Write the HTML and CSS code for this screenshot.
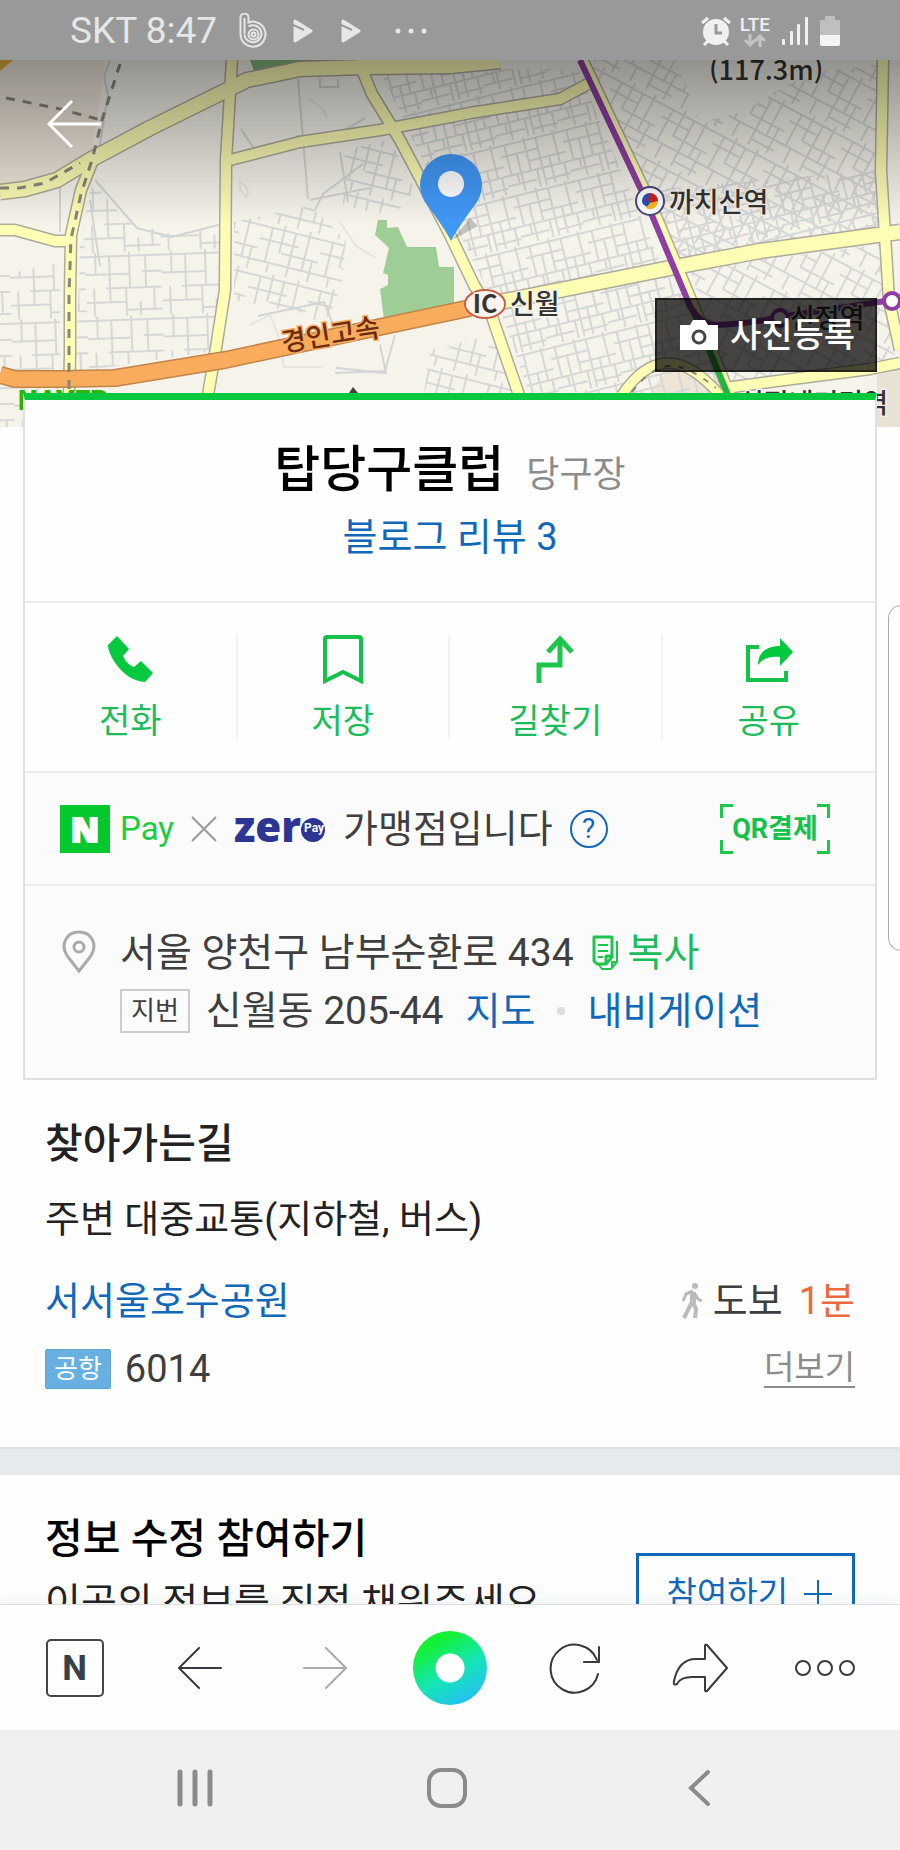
FILE: index.html
```html
<!DOCTYPE html>
<html lang="ko">
<head>
    <meta charset="UTF-8">
    <meta name="viewport" content="width=device-width, initial-scale=1.0">
    <title>탑당구클럽</title>
    <link rel="stylesheet" href="styles.css">
</head>
<body>
    <header class="status-bar">
        <div class="status-left">
            <span class="carrier">SKT 8:47</span>
            <svg class="icon-band" width="30" height="36" viewBox="0 0 30 36" fill="none" stroke="#e6e6e6" stroke-width="2">
                <path d="M1.500 21V4.500a3.500 3.500 0 0 1 8 0V9.500a12.500 12.500 0 1 1-8 12z"/>
                <path d="M5.500 21V5M9.500 13.500a8.500 8.500 0 1 1-4 8"/>
                <circle cx="14.500" cy="21.500" r="5"/>
                <circle cx="14.500" cy="21.500" r="2"/>
            </svg>
            <svg class="icon-play" width="20" height="24" viewBox="0 0 20 24">
                <path d="M2 2l16 10-16 10z" fill="#e6e6e6" stroke="#e6e6e6" stroke-width="3" stroke-linejoin="round"/>
                <path d="M0 6l11 5" fill="none" stroke="#999" stroke-width="2"/>
            </svg>
            <svg class="icon-play" width="20" height="24" viewBox="0 0 20 24">
                <path d="M2 2l16 10-16 10z" fill="#e6e6e6" stroke="#e6e6e6" stroke-width="3" stroke-linejoin="round"/>
                <path d="M0 6l11 5" fill="none" stroke="#999" stroke-width="2"/>
            </svg>
            <svg width="32" height="6" viewBox="0 0 32 6" fill="#e6e6e6">
                <circle cx="3" cy="3" r="2.500"/><circle cx="16" cy="3" r="2.500"/><circle cx="29" cy="3" r="2.500"/>
            </svg>
        </div>
        <div class="status-right">
            <svg width="32" height="30" viewBox="0 0 32 30" fill="none" stroke="#f0f0f0">
                <circle cx="16" cy="16" r="13" fill="#f0f0f0" stroke="none"/>
                <path d="M2 7l6-5M30 7l-6-5M8 25l-4 4M24 25l4 4" stroke-width="3"/>
                <path d="M16 8v9h6" stroke="#999" stroke-width="3"/>
            </svg>
            <div class="lte">
                <span>LTE</span>
                <svg width="22" height="13" viewBox="0 0 22 13" fill="none" stroke="#c4c4c4" stroke-width="3">
                    <path d="M6 0v11M1 6l5 5 5-5M16 13V2M11 7l5-5 5 5"/>
                </svg>
            </div>
            <svg width="26" height="28" viewBox="0 0 26 28" fill="#f0f0f0">
                <rect x="0" y="22" width="3" height="6" rx="1"/><rect x="8" y="14" width="3" height="14" rx="1"/>
                <rect x="15" y="7" width="3" height="21" rx="1"/><rect x="23" y="0" width="3" height="28" rx="1"/>
            </svg>
            <svg width="20" height="30" viewBox="0 0 20 30">
                <path d="M5 4V0h10v4h5v15H0V4z" fill="#bfbfbf"/>
                <path d="M0 19h20v9q0 2-2 2H2q-2 0-2-2z" fill="#f4f4f4"/>
            </svg>
        </div>
    </header>

    <main class="page">
        <section class="hero">
            <svg class="map" viewBox="0 60 900 367" preserveAspectRatio="xMidYMin slice">
                <defs>
                    <pattern id="blocks" width="76" height="64" patternUnits="userSpaceOnUse" patternTransform="rotate(-2)">
                        <path d="M0 4h76M0 22h44M20 36h56M0 50h40M56 20h20M40 58h36M10 0v22M24 4v46M44 0v36M60 4v32M8 36v28M40 36v28M54 50v14M68 36v22"/>
                    </pattern>
                    <pattern id="dense" width="64" height="52" patternUnits="userSpaceOnUse" patternTransform="rotate(-14)">
                        <path d="M0 3h64M0 14h38M26 24h38M0 34h64M0 44h30M38 46h26M6 3v31M16 14v38M26 0v34M38 3v49M47 24v28M56 0v34M12 34v10M32 34v18M60 34v18"/>
                    </pattern>
                    <pattern id="dense2" width="58" height="56" patternUnits="userSpaceOnUse" patternTransform="rotate(28)">
                        <path d="M0 5h58M0 16h32M20 28h38M0 40h58M32 50h26M8 5v35M20 0v28M32 5v51M44 0v40M52 28v28M14 40v16"/>
                    </pattern>
                    <pattern id="dense3" width="62" height="50" patternUnits="userSpaceOnUse" patternTransform="rotate(14)">
                        <path d="M0 5h62M0 18h40M24 28h38M0 40h62M10 5v35M22 0v28M34 5v45M48 0v40M56 28v22M14 40v10"/>
                    </pattern>
                    <linearGradient id="shade" x1="0" y1="0" x2="0" y2="1">
                        <stop offset="0" stop-color="#000" stop-opacity=".4"/>
                        <stop offset="1" stop-color="#000" stop-opacity="0"/>
                    </linearGradient>
                </defs>
                <rect x="0" y="60" width="900" height="367" fill="#f6f3eb"/>
                <path d="M0 60h105L92 155l-37 22-55 8z" fill="#f0e8dc"/>
                <path d="M650 395q10-24 30-26t42 26z" fill="#eee4d6"/>
                <path d="M877 375l23-5v57h-23z" fill="#e8e2d4"/>
                <path d="M0 60h13L0 71z" fill="#e5b13c"/>

                <!-- side streets -->
                <g class="street">
                    <path d="M0 275l60-12v164H0z" fill="url(#blocks)"/>
                    <path d="M80 242l12-60 36 40 46 13 46-11v126l-144 22z" fill="url(#blocks)"/>
                    <path d="M234 222l76-16 36 34-4 44-16 42-28-14-64-12z" fill="url(#dense3)"/>
                    <path d="M380 72l60-3 138 0 50 118 46 108-180 8-65-130z" fill="url(#dense)"/>
                    <path d="M345 150l45-10 25 50-20 26-52-10z" fill="url(#dense3)"/>
                    <path d="M590 60h86l24 62 44-10 60-38 76-10v178l-130 20-70 12z" fill="url(#dense2)"/>
                    <path d="M650 190l228-20v60l-196 32z" fill="url(#dense)"/>
                    <path d="M500 310l180-35 44 120H530z" fill="url(#dense)"/>
                    <path d="M690 270l192-26 14 120-166 20z" fill="url(#dense2)"/>
                    <path d="M430 350l66-16 24 60h-96z" fill="url(#dense3)"/>
                    <path d="M110 60l-6 17 4 18-10 60M95 180l42 48 35 9 50-13M90 200l10 66M60 180v52M298 79l10 120M320 78v9h18V79M241 129l14 21M280 145l18-9 18 8M365 118l-20 12 25-3M340 152l8 50M310 200l60-12M315 210l8-16 40-30M380 345l6 28-50-5M395 335l-10 36-50 2M258 316l66-14 16 40"/>
                    <path d="M240 182q12 8 6 15l-6-8zM308 98l14 10 5 10M340 222l16 24 20 12M250 325l20-10 8 20 6 32h38" class="trail"/>
                </g>

                <path d="M250 60h73v3l-23 3-45 8z" fill="#83b87c"/>
                <path d="M378 220h9v8l11-1 9 20h29l3 20h15v38l-70 14-4-30 8-4v-10l-5-2 6-25-14-13z" fill="#9ecd95"/>

                <!-- main roads: casing first, fill on top -->
                <g class="road-edge">
                    <path d="M0 192l25-3 32-9 33-20 60-32 75-37 22-11 53-11 65-2 85-1 50-5" stroke-width="17"/>
                    <path d="M0 230h15l40 11h15M230 160l70-18 80-12 70-13 20-4 90-14 28-15M93 160l-12 30-10 45-1 60v60l-1 40" stroke-width="13"/>
                    <path d="M232 60l-6 100-1 130-9 58-8 47M358 60l14 34 28 46 50 95 24 50 16 26 29 84" stroke-width="13"/>
                    <path d="M490 304l70-14 120-24 80-15 140-19" stroke-width="17"/>
                    <path d="M883 60l-2 110 4 65 4 65 11 50M725 388l75-10 70-9 30-6" stroke-width="13"/>
                    <path d="M583 60l67 141 50 119 30 75M622 395q20-30 44-32t54 32" stroke-width="12"/>
                </g>
                <g class="road">
                    <path d="M0 192l25-3 32-9 33-20 60-32 75-37 22-11 53-11 65-2 85-1 50-5" stroke-width="14"/>
                    <path d="M0 230h15l40 11h15M230 160l70-18 80-12 70-13 20-4 90-14 28-15M93 160l-12 30-10 45-1 60v60l-1 40" stroke-width="10"/>
                    <path d="M232 60l-6 100-1 130-9 58-8 47M358 60l14 34 28 46 50 95 24 50 16 26 29 84" stroke-width="10"/>
                    <path d="M490 304l70-14 120-24 80-15 140-19" stroke-width="14"/>
                    <path d="M883 60l-2 110 4 65 4 65 11 50M725 388l75-10 70-9 30-6" stroke-width="10"/>
                    <path d="M583 60l67 141 50 119 30 75M622 395q20-30 44-32t54 32" stroke-width="9"/>
                </g>

                <g fill="none" stroke-linejoin="round">
                    <path d="M0 375l15 4h45l55-1 110-18 155-33 90-19" stroke="#c1854a" stroke-width="18"/>
                    <path d="M0 375l15 4h45l55-1 110-18 155-33 90-19" stroke="#f9ac5c" stroke-width="15"/>
                    <path d="M120 64l-18 56-10 40-11 34-10 45-2 56v100M6 98l50 10 45 12M0 188h20l25-5 35-20" stroke="#8c857b" stroke-width="3" stroke-dasharray="9 8"/>
                    <path d="M632 392q18-24 36-26t48 22" stroke="#8c857b" stroke-width="2" stroke-dasharray="6 8"/>
                    <path d="M693 310l35 85" stroke="#25b43a" stroke-width="6"/>
                    <path d="M580 60l63 134 47 112q10 18 26 19 40-2 64-8l112-17" stroke="#8f3fa3" stroke-width="6"/>
                </g>
                <circle cx="892" cy="301" r="8" fill="#fff" stroke="#8f3fa3" stroke-width="4"/>
                <circle cx="780" cy="318" r="8" fill="#fff" stroke="#8f3fa3" stroke-width="4"/>
                <circle cx="650" cy="201" r="14" fill="#fff" stroke="#4c4a78" stroke-width="2"/>
                <path d="M642 201a8 8 0 0 1 8-8l2 8-4 6q-6-2-6-6z" fill="#2b50b8"/>
                <path d="M650 193a8 8 0 0 1 8 8l-5 3-5-4z" fill="#d02020"/>
                <path d="M658 201a8 8 0 0 1-12 7l4-5z" fill="#f5bd18"/>

                <text class="map-label" x="669" y="212">까치산역</text>
                <text class="map-label" x="510" y="314">신월</text>
                <text class="map-label" x="790" y="328">신정역</text>
                <text class="map-label" x="888" y="413" text-anchor="end">신정네거리역</text>
                <text class="map-label" x="709" y="80">(117.3m)</text>
                <text class="map-label highway" x="283" y="352" transform="rotate(-9 283 352)">경인고속</text>
                <ellipse cx="485" cy="304" rx="20" ry="14" fill="#fdf3ef" stroke="#c8614a" stroke-width="2"/>
                <text class="map-label ic" x="485" y="313" text-anchor="middle">IC</text>
                <text class="map-brand" x="18" y="410">NAVER</text>
                <path d="M353 387l5 6h-9z" fill="#444"/>

                <path d="M452 240l26-14-8-8z" fill="#000" opacity=".2"/>
                <path d="M451 241q-6-12-26-39a31 31 0 1 1 52 0q-20 27-26 39z" fill="#4198f7"/>
                <circle cx="451" cy="184" r="13" fill="#fff"/>
                <rect x="0" y="60" width="900" height="165" fill="url(#shade)"/>
            </svg>
            <button class="back-btn" aria-label="뒤로">
                <svg width="54" height="50" viewBox="0 0 54 50" fill="none" stroke="#fff" stroke-width="3">
                    <path d="M54 25H2M25 2L2 25l23 23"/>
                </svg>
            </button>
            <button class="photo-btn">
                <svg width="38" height="30" viewBox="0 0 38 30">
                    <path d="M0 5h10l3-5h12l3 5h10v25H0z" fill="#fff"/>
                    <circle cx="19" cy="17" r="6" fill="#fff" stroke="#454545" stroke-width="3"/>
                </svg>
                사진등록
            </button>
        </section>

        <section class="card">
            <div class="place">
                <div class="place-title">
                    <h1>탑당구클럽</h1>
                    <span class="category">당구장</span>
                </div>
                <a class="review" href="#">블로그 리뷰 3</a>
            </div>

            <div class="actions">
                <button class="action">
                    <svg width="48" height="50" viewBox="0 0 48 50" fill="#04c93f">
                        <path d="M11 1L2 10c0 5 3 12 8 19 8 11 17 17 29 18l8-9-12-12-7 6c-5-2-9-6-11-11l6-7z"/>
                    </svg>
                    전화
                </button>
                <button class="action">
                    <svg width="48" height="50" viewBox="0 0 48 50" fill="none" stroke="#14c14a" stroke-width="4">
                        <path d="M6 46V4q0-2 2-2h32q2 0 2 2v42L24 37z"/>
                    </svg>
                    저장
                </button>
                <button class="action">
                    <svg width="48" height="50" viewBox="0 0 48 50" fill="none" stroke="#1ec64c" stroke-width="5">
                        <path d="M8 48V30h21V4M17 17L29 4l12 13"/>
                    </svg>
                    길찾기
                </button>
                <button class="action">
                    <svg width="48" height="50" viewBox="0 0 48 50">
                        <path d="M14 12H3v33h38V36" fill="none" stroke="#14c14a" stroke-width="4"/>
                        <path d="M35 3l13 14-13 14v-9c-11-1-18 2-22 8 0-12 8-19 22-19z" fill="#04c93f"/>
                    </svg>
                    공유
                </button>
            </div>

            <div class="pay">
                <span class="npay-mark">N</span>
                <span class="npay-text">Pay</span>
                <svg width="26" height="26" viewBox="0 0 26 26" fill="none" stroke="#999" stroke-width="2">
                    <path d="M1 1l24 24M25 1L1 25"/>
                </svg>
                <svg class="zero" width="92" height="40" viewBox="0 0 92 40">
                    <text x="0" y="33" class="zero-name">zer</text>
                    <circle cx="79" cy="21" r="12" fill="#2c3592"/>
                    <text x="70" y="23" class="zero-pay">Pay</text>
                </svg>
                <span class="pay-text">가맹점입니다</span>
                <button class="help" aria-label="도움말">?</button>
                <button class="qr">QR결제</button>
            </div>

            <div class="address">
                <svg class="pin" width="34" height="44" viewBox="0 0 34 44" fill="none" stroke="#aaa" stroke-width="3">
                    <path d="M17 41L6 27C-3 14 5 2 17 2s20 12 11 25z"/>
                    <circle cx="17" cy="17" r="5"/>
                </svg>
                <div class="address-lines">
                    <div class="line">
                        <span>서울 양천구 남부순환로 434</span>
                        <button class="copy">
                            <svg width="28" height="36" viewBox="0 0 28 36" fill="none" stroke="#1ec64c" stroke-width="3" stroke-linejoin="round">
                                <path d="M2 2h18v20l-6 7H5l-3-3zM20 21h-6v7"/>
                                <path d="M25 6v21l-6 7h-9l-3-4M25 27h-5v5" stroke-width="2"/>
                                <path d="M6 10h10M6 16h10M6 22h5" stroke-width="2"/>
                            </svg>
                            복사
                        </button>
                    </div>
                    <div class="line">
                        <span class="tag">지번</span>
                        <span>신월동 205-44</span>
                        <a class="map-link" href="#">지도</a>
                        <i class="dot"></i>
                        <a href="#">내비게이션</a>
                    </div>
                </div>
            </div>
        </section>

        <section class="directions">
            <h2>찾아가는길</h2>
            <p>주변 대중교통(지하철, 버스)</p>
            <div class="row">
                <a href="#">서서울호수공원</a>
                <span class="walk">
                    <svg width="22" height="36" viewBox="0 0 22 36" fill="none" stroke="#bbb" stroke-linejoin="round">
                        <circle cx="14" cy="3" r="3" fill="#bbb" stroke="none"/>
                        <path d="M12 9v12" stroke-width="6"/>
                        <path d="M12 8l-7 3-3 7M14 11l3 5 4 2" stroke-width="3"/>
                        <path d="M11 19L3 35M12 19l3 7-1 9" stroke-width="4"/>
                    </svg>
                    도보 <em>1분</em>
                </span>
            </div>
            <div class="row">
                <span class="bus"><span class="bus-tag">공항</span>6014</span>
                <a class="more" href="#">더보기</a>
            </div>
        </section>

        <section class="edit">
            <div>
                <h2>정보 수정 참여하기</h2>
                <p>이곳의 정보를 직접 채워주세요</p>
            </div>
            <button class="join">
                참여하기
                <svg width="28" height="28" viewBox="0 0 28 28" stroke="#1268b8" stroke-width="2"><path d="M14 0v28M0 14h28"/></svg>
            </button>
        </section>
    </main>
    <div class="edge-handle"></div>

    <nav class="toolbar">
        <button class="home" aria-label="홈"><span>N</span></button>
        <button aria-label="이전">
            <svg width="44" height="44" viewBox="0 0 44 44" fill="none" stroke="#3a3a3e" stroke-width="2" stroke-linecap="round" stroke-linejoin="round"><path d="M43 22H1M21 2L1 22l20 20"/></svg>
        </button>
        <button aria-label="다음">
            <svg width="44" height="44" viewBox="0 0 44 44" fill="none" stroke="#aaa" stroke-width="2" stroke-linecap="round" stroke-linejoin="round"><path d="M1 22h42M23 2l20 20-20 20"/></svg>
        </button>
        <button aria-label="그린닷"><span class="green-dot"></span></button>
        <button aria-label="새로고침">
            <svg width="52" height="52" viewBox="0 0 52 52" fill="none" stroke="#3a3a3e" stroke-width="2" stroke-linecap="round" stroke-linejoin="round"><path d="M49 32a24 24 0 1 1-1-14M50 5v15H35"/></svg>
        </button>
        <button aria-label="공유하기">
            <svg width="56" height="50" viewBox="0 0 56 50" fill="none" stroke="#3a3a3e" stroke-width="2" stroke-linejoin="round"><path d="M33 3q0-2 2-1l20 23-20 23q-2 1-2-1V34H20c-8 0-13 3-15 7q-4 2-3-3C5 24 12 16 24 16h9z"/></svg>
        </button>
        <button aria-label="더보기 메뉴">
            <svg width="62" height="18" viewBox="0 0 62 18" fill="none" stroke="#3a3a3e" stroke-width="2"><circle cx="9" cy="9" r="7"/><circle cx="31" cy="9" r="7"/><circle cx="53" cy="9" r="7"/></svg>
        </button>
    </nav>

    <nav class="system-nav">
        <button aria-label="최근 앱">
            <svg width="36" height="38" viewBox="0 0 36 38" fill="none" stroke="#8b8b8b" stroke-width="5" stroke-linecap="round"><path d="M3 3v32M18 3v32M33 3v32"/></svg>
        </button>
        <button aria-label="홈 화면">
            <svg width="42" height="42" viewBox="0 0 42 42" fill="none" stroke="#8b8b8b" stroke-width="4"><rect x="3" y="3" width="36" height="36" rx="12"/></svg>
        </button>
        <button aria-label="뒤로 가기">
            <svg width="24" height="38" viewBox="0 0 24 38" fill="none" stroke="#8b8b8b" stroke-width="4" stroke-linecap="round"><path d="M21 3L4 19l17 16"/></svg>
        </button>
    </nav>
</body>
</html>
```
FILE: styles.css
```css
:root {
    --green: #1cbc5c;
    --blue: #1268b8;
    --text: #3f3f3f;
    --line: #ececec;
}

* {
    box-sizing: border-box;
}

body {
    margin: 0;
    height: 100vh;
    display: flex;
    flex-direction: column;
    position: relative;
    overflow: hidden;
    background: #fefefe;
    color: var(--text);
    font-family: Roboto, "Noto Sans CJK KR", sans-serif;
    font-size: 38px;
    line-height: 56px;
}

h1, h2, p {
    margin: 0;
}

a {
    color: var(--blue);
    text-decoration: none;
}

button {
    border: 0;
    padding: 0;
    background: none;
    font: inherit;
    color: inherit;
}

svg {
    display: block;
    flex-shrink: 0;
}

/* Status bar */
.status-bar {
    flex: 0 0 60px;
    display: flex;
    justify-content: space-between;
    align-items: center;
    padding: 2px 60px 0 70px;
    background: #999;
}

.status-left,
.status-right {
    display: flex;
    align-items: center;
}

.carrier {
    margin-right: 22px;
    color: #e6e6e6;
    font-size: 37px;
}

.icon-band {
    margin-right: 24px;
}

.icon-play {
    margin-right: 28px;
}

.icon-play + svg:last-child {
    margin-left: 6px;
}

.status-right {
    gap: 12px;
}

.lte {
    display: flex;
    flex-direction: column;
    align-items: center;
    margin-left: -4px;
    color: #f0f0f0;
    font-size: 19px;
    font-weight: 500;
    line-height: 18px;
}

/* Page */
.page {
    flex: 1;
    min-height: 0;
    overflow: hidden;
}

.hero {
    position: relative;
    height: 367px;
}

.map {
    width: 100%;
    height: 100%;
}

.street {
    fill: none;
    stroke: #d3d4d4;
    stroke-width: 2;
}

pattern path {
    fill: none;
    stroke: #d6d7d7;
    stroke-width: 2;
}

.street path[fill] {
    stroke: none;
}

.trail {
    stroke: #e6e4df;
}

.road-edge,
.road {
    fill: none;
    stroke: #aeab9c;
    stroke-linejoin: round;
}

.road {
    stroke: #fdfdb4;
}

.map-label {
    fill: #333;
    stroke: #f6f3eb;
    stroke-width: 3px;
    paint-order: stroke;
    font-family: "Noto Sans CJK KR", sans-serif;
    font-size: 27px;
    font-weight: 500;
}

.highway {
    fill: #6b2c10;
    stroke: #f9ac5c;
}

.ic {
    font-size: 25px;
    font-weight: 700;
}

.map-brand {
    fill: #2db400;
    font-size: 28px;
    font-weight: 900;
}

.back-btn {
    position: absolute;
    top: 39px;
    left: 47px;
}

.photo-btn {
    position: absolute;
    right: 23px;
    bottom: 55px;
    display: flex;
    align-items: center;
    gap: 12px;
    height: 74px;
    padding: 0 20px 0 23px;
    border: 2px solid rgba(0, 0, 0, 0.5);
    background: rgba(0, 0, 0, 0.72);
    color: #fff;
    font-size: 34px;
    font-weight: 500;
}

/* Place card */
.card {
    position: relative;
    margin: -34px 23px 0;
    border: 2px solid #e0e0e0;
    border-top: 7px solid #06c83f;
    background: #fefefe;
}

.place {
    padding: 42px 0 36px;
    text-align: center;
}

.place-title {
    display: flex;
    justify-content: center;
    align-items: baseline;
    gap: 22px;
    margin-bottom: 6px;
}

h1 {
    color: #000;
    font-size: 50px;
    font-weight: 500;
}

.category {
    color: #8c8c8c;
    font-size: 36px;
}

.review {
    display: block;
}

.actions {
    display: grid;
    grid-template-columns: repeat(4, 1fr);
    padding: 32px 0;
    border-top: 2px solid var(--line);
}

.action {
    display: flex;
    flex-direction: column;
    align-items: center;
    gap: 12px;
    height: 104px;
    border-right: 2px solid #f2f2f2;
    color: var(--green);
    font-size: 34px;
    line-height: 48px;
}

.action:last-child {
    border-right: 0;
}

.pay {
    display: flex;
    align-items: center;
    height: 113px;
    padding: 0 45px 0 35px;
    border-top: 2px solid var(--line);
    background: #fbfbfb;
}

.npay-mark {
    width: 50px;
    height: 48px;
    background: #04c92e;
    color: #fff;
    -webkit-text-stroke: 2px #fff;
    font-family: "Open Sans", sans-serif;
    font-size: 34px;
    font-weight: 800;
    line-height: 48px;
    text-align: center;
}

.npay-text {
    margin: 0 17px 0 10px;
    color: #1ccd3e;
    font-size: 33px;
}

.zero {
    margin: 0 17px 0 17px;
}

.zero-name {
    fill: #2c3592;
    font-family: "Open Sans", sans-serif;
    font-size: 42px;
    font-weight: 800;
}

.zero-pay {
    fill: #fff;
    font-size: 12px;
    font-weight: 700;
}

.help {
    width: 38px;
    height: 38px;
    margin-left: 17px;
    border: 2px solid var(--blue);
    border-radius: 50%;
    color: var(--blue);
    font-size: 28px;
    line-height: 34px;
}

/* four corner brackets around the label */
.qr {
    --bracket: linear-gradient(#1ec64c, #1ec64c);
    width: 110px;
    margin-left: auto;
    background:
        var(--bracket) 0 0 / 13px 3px, var(--bracket) 0 0 / 3px 14px,
        var(--bracket) 100% 0 / 13px 3px, var(--bracket) 100% 0 / 3px 14px,
        var(--bracket) 0 100% / 13px 3px, var(--bracket) 0 100% / 3px 14px,
        var(--bracket) 100% 100% / 13px 3px, var(--bracket) 100% 100% / 3px 14px;
    background-repeat: no-repeat;
    color: #14c14a;
    font-size: 27px;
    font-weight: 700;
    line-height: 50px;
}

.address {
    display: flex;
    gap: 24px;
    padding: 38px 35px 38px 37px;
    border-top: 2px solid var(--line);
    background: #fbfbfb;
}

.pin {
    margin-top: 6px;
}

.address-lines {
    flex: 1;
    font-size: 39px;
}

.line {
    display: flex;
    align-items: center;
    height: 58px;
}

.copy {
    display: flex;
    align-items: center;
    gap: 8px;
    margin-left: 18px;
    color: var(--green);
    font-size: 39px;
}

.tag {
    margin-right: 16px;
    padding: 0 9px;
    border: 2px solid #ccc;
    font-size: 26px;
    line-height: 40px;
}

.map-link {
    margin-left: 22px;
}

.line a {
    font-size: 38px;
}

.dot {
    width: 8px;
    height: 8px;
    margin: 0 22px;
    border-radius: 3px;
    background: #ddd;
}

/* Directions */
.directions {
    padding: 36px 45px 50px;
    border-bottom: 2px solid #dfe2e4;
    color: #222;
}

h2 {
    font-size: 41px;
    font-weight: 500;
}

.directions p {
    margin-top: 19px;
}

.row {
    display: flex;
    justify-content: space-between;
    align-items: center;
    margin-top: 12px;
    color: var(--text);
}

p + .row {
    margin-top: 26px;
}

.walk,
.bus {
    display: flex;
    align-items: center;
    gap: 14px;
}

.walk {
    gap: 10px;
}

.walk em {
    margin-left: 6px;
    color: #ec6a3c;
    font-style: normal;
}

.bus-tag {
    padding: 0 8px;
    border: 1px solid #62a3d0;
    border-radius: 2px;
    background: #68b0e2;
    color: #fff;
    font-size: 26px;
    line-height: 38px;
}

.more {
    border-bottom: 2px solid #8c8c8c;
    color: #8c8c8c;
    font-size: 33px;
    line-height: 36px;
}

/* Edit request */
.edit {
    display: flex;
    justify-content: space-between;
    align-items: flex-start;
    padding: 36px 45px;
    border-top: 26px solid #e6eaed;
    color: #222;
}

.edit h2 {
    color: #000;
}

.edit p {
    margin-top: 8px;
    font-size: 39px;
}

.join {
    display: flex;
    align-items: center;
    gap: 16px;
    height: 82px;
    margin-top: 42px;
    padding: 0 20px 0 28px;
    border: 3px solid var(--blue);
    color: var(--blue);
    font-size: 33px;
}

.edge-handle {
    position: absolute;
    top: 605px;
    right: -14px;
    width: 26px;
    height: 346px;
    border: 1px solid #aaa;
    border-radius: 14px;
    background: #fff;
}

/* Browser toolbar */
.toolbar {
    position: relative;
    flex: 0 0 126px;
    display: grid;
    grid-template-columns: repeat(7, 1fr);
    padding: 0 12px;
    border-top: 1px solid #dcdfe1;
    background: #fefefe;
    box-shadow: 0 -4px 12px rgba(80, 100, 120, 0.08);
}

.toolbar button,
.system-nav button {
    display: grid;
    place-items: center;
}

.home span {
    width: 58px;
    height: 58px;
    border: 2px solid #444549;
    border-radius: 5px;
    color: #36414a;
    font-size: 35px;
    font-weight: 700;
    line-height: 56px;
}

.green-dot {
    width: 74px;
    height: 74px;
    border-radius: 50%;
    background: radial-gradient(circle, #fff 14px, transparent 15px), linear-gradient(150deg, #14f032 20%, #14e6b4 55%, #28b8ff 95%);
}

.system-nav {
    flex: 0 0 120px;
    display: grid;
    grid-template-columns: repeat(3, 1fr);
    padding: 0 75px 5px 69px;
    background: #f0f0f0;
}
```
